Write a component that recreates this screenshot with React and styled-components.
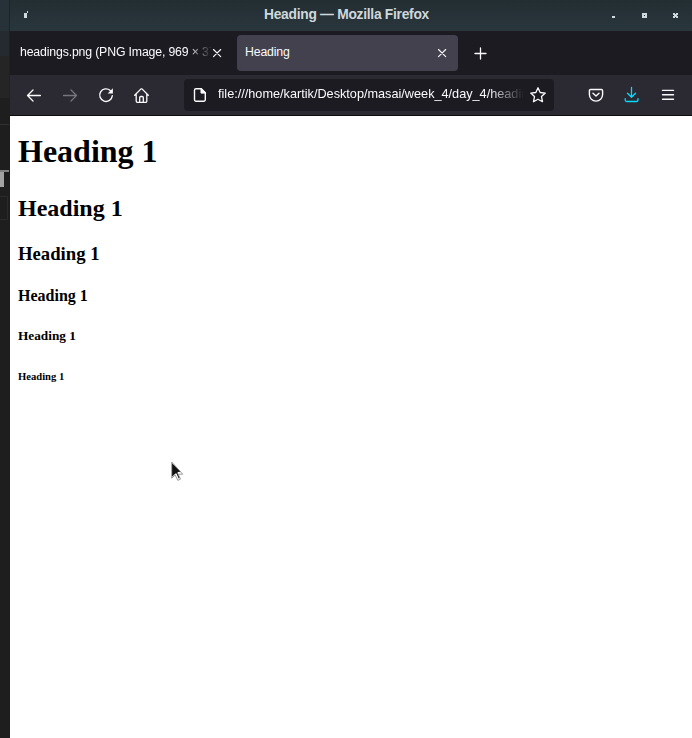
import React from "react";
import styled, { createGlobalStyle } from "styled-components";

const GlobalStyle = createGlobalStyle`
  * { box-sizing: border-box; }
  body { margin: 0; background: #1e1e1e; overflow: hidden; }
`;

const Desktop = styled.div`
  display: flex;
  width: 692px;
  height: 738px;
  overflow: hidden;
  font-family: "Liberation Sans", Arial, sans-serif;
`;

const EditorEdge = styled.div`
  width: 10px;
  flex: none;
  display: flex;
  flex-direction: column;
  background: #1e1e1e;
`;

const EdgeBlock = styled.div`
  flex: none;
  width: ${(p) => p.$w || 10}px;
  height: ${(p) => p.$h}px;
  background: ${(p) => p.$bg || "transparent"};
  border-right: ${(p) => (p.$line ? `1px solid ${p.$line}` : "none")};
`;

const EdgeLetter = styled.div`
  flex: none;
  width: 9px;
  height: 17px;
  border-top: 2px solid #818181;
  &::before {
    content: "";
    display: block;
    width: 4px;
    height: 15px;
    background: #a3a3a3;
  }
`;

const EdgeBox = styled.div`
  flex: none;
  width: 8px;
  height: 24px;
  margin-top: 9px;
  border: 1px solid #2a2a2a;
  border-left: none;
`;

const Window = styled.div`
  flex: 1;
  min-width: 0;
  display: flex;
  flex-direction: column;
  background: #fff;
`;

const TitleBar = styled.header`
  flex: none;
  height: 31px;
  display: grid;
  grid-template-columns: 100px 1fr 100px;
  background: linear-gradient(#232e33, #29363b);
`;

const WindowTitle = styled.div`
  padding-top: 6px;
  padding-right: 9px;
  text-align: center;
  white-space: nowrap;
  font-size: 13.8px;
  letter-spacing: -0.27px;
  line-height: 18px;
  font-weight: 700;
  color: #cfd8dc;
`;

const TabStrip = styled.div`
  flex: none;
  height: 44px;
  display: flex;
  align-items: flex-start;
  padding-top: 4px;
  background: #1c1b22;
`;

const Tab = styled.div`
  width: ${(p) => p.$w}px;
  height: 36px;
  margin-right: ${(p) => p.$gap}px;
  padding: 0 ${(p) => p.$pr}px 0 ${(p) => p.$pl}px;
  display: flex;
  justify-content: space-between;
  border-radius: 4px;
  color: #fbfbfe;
  background: ${(p) => (p.$active ? "#42414d" : "transparent")};
`;

const TabLabel = styled.span`
  flex: 1;
  min-width: 0;
  overflow: hidden;
  white-space: nowrap;
  font-size: 12.3px;
  line-height: 16px;
  padding-top: 9px;
  letter-spacing: -0.16px;
  mask-image: ${(p) =>
    p.$fade ? "linear-gradient(to left, transparent, black 24px)" : "none"};
`;

const Icon = styled.svg`
  flex: none;
  display: block;
  overflow: visible;
  fill: none;
  stroke: ${(p) => p.$color || "#fbfbfe"};
  stroke-width: ${(p) => p.$sw || 1.3};
  stroke-linecap: round;
  stroke-linejoin: round;
  margin-top: ${(p) => p.$mt || 0}px;
  margin-left: ${(p) => p.$ml || 0}px;
`;

const NavBar = styled.div`
  flex: none;
  height: 41px;
  display: flex;
  align-items: flex-start;
  padding: 4px 15px 0 16px;
  background: #2b2a33;
  border-bottom: 1px solid #0c0c0d;
`;

const AddressBar = styled.div`
  flex: none;
  width: 370px;
  height: 32px;
  margin-left: 34px;
  padding: 0 8px;
  display: flex;
  border-radius: 4px;
  background: #1c1b22;
`;

const Address = styled.div`
  flex: none;
  width: 306px;
  margin-left: 10px;
  padding-top: 7px;
  overflow: hidden;
  white-space: nowrap;
  font-size: 12.7px;
  line-height: 16px;
  color: #fbfbfe;
  mask-image: linear-gradient(to left, transparent, black 36px);
`;

const Page = styled.main`
  position: relative;
  flex: 1;
  display: flex;
  flex-direction: column;
  padding-left: 8px;
  background: #fff;
`;

const Heading = styled.div`
  flex: none;
  margin: ${(p) => p.$top}px 0 0;
  font-family: "Liberation Serif", "Times New Roman", serif;
  font-size: ${(p) => p.$size}px;
  line-height: ${(p) => p.$lh}px;
  font-weight: 700;
  color: #000;
`;

const Pointer = styled.svg`
  position: absolute;
  left: 161px;
  top: 345px;
`;

const headings = [
  { tag: "h1", size: 32, lh: 36, top: 17 },
  { tag: "h2", size: 24, lh: 28, top: 25 },
  { tag: "h3", size: 18.72, lh: 22, top: 21 },
  { tag: "h4", size: 16, lh: 18, top: 22 },
  { tag: "h5", size: 13.28, lh: 16, top: 23 },
  { tag: "h6", size: 10.6, lh: 12, top: 27 },
];

const CloseIcon = (p) => (
  <Icon width="8" height="8" $mt={14} $sw={1.1} {...p}>
    <path d="M.5 .5l7.2 7.2M7.7 .5L.5 7.7" />
  </Icon>
);

export default function App() {
  return (
    <>
      <GlobalStyle />
      <Desktop>
        <EditorEdge>
          <EdgeBlock $h={31} $bg="#263238" $line="#1a2529" />
          <EdgeBlock $h={25} $bg="#252a31" $line="#1c2227" />
          <EdgeBlock $h={42} $bg="#252526" $line="#1c2227" />
          <EdgeBlock $h={26} />
          <EdgeBlock $h={1} $w={9} $bg="#303031" />
          <EdgeBlock $h={45} />
          <EdgeLetter />
          <EdgeBox />
        </EditorEdge>
        <Window>
          <TitleBar>
            <svg width="100" height="31" fill="#cfd8dc" shapeRendering="crispEdges">
              <path d="M14 13h3v5h-3zM17 11h1v2h-1z" />
            </svg>
            <WindowTitle>Heading — Mozilla Firefox</WindowTitle>
            <svg width="100" height="31" fill="#cfd8dc" shapeRendering="crispEdges">
              <path d="M20 16h3v2h-3z" />
              <path fillRule="evenodd" d="M50 13h5v5h-5zM52 15v1h1v-1z" />
              <path d="M81 13h2v1h1v-1h2v2h-1v1h1v2h-2v-1h-1v1h-2v-2h1v-1h-1z" />
            </svg>
          </TitleBar>
          <TabStrip>
            <Tab $w={221} $gap={6} $pl={10} $pr={10}>
              <TabLabel $fade>headings.png (PNG Image, 969 × 37</TabLabel>
              <CloseIcon $ml={1} />
            </Tab>
            <Tab $active $w={221} $gap={17} $pl={8} $pr={12}>
              <TabLabel>Heading</TabLabel>
              <CloseIcon />
            </Tab>
            <Icon width="12" height="12" $mt={13} $sw={1.3}>
              <path d="M5.5 0v11M0 5.5h11" />
            </Icon>
          </TabStrip>
          <NavBar>
            <Icon width="16" height="16" $mt={8}>
              <path d="M14.4 8.5H1.6M7 3L1.5 8.5 7 14" />
            </Icon>
            <Icon width="16" height="16" $mt={8} $ml={20} $color="#76757d">
              <path d="M1.5 8.5h12.8M9 3l5.5 5.5L9 14" />
            </Icon>
            <Icon width="16" height="16" $mt={8} $ml={20} $sw={1.4}>
              <path d="M12.3 3.5A6.3 6.3 0 1 0 14.3 8.8" />
              <path d="M14.9 1.2v5.2H9.7z" fill="#fbfbfe" stroke="none" />
            </Icon>
            <Icon width="16" height="16" $mt={8} $ml={20} $sw={1.3}>
              <path d="M.7 8.3L7 1.9h1l6.3 6.4M2.2 7.2v6.9a1.2 1.2 0 0 0 1.2 1.2h8.2a1.2 1.2 0 0 0 1.2-1.2V7.2M5.7 15v-4.5a1 1 0 0 1 1-1h1.6a1 1 0 0 1 1 1V15" />
            </Icon>
            <AddressBar>
              <Icon width="16" height="16" $mt={8} $sw={1.4}>
                <path d="M4 1.8h5.3l4 4v7a1.5 1.5 0 0 1-1.5 1.5H4a1.5 1.5 0 0 1-1.5-1.5V3.3A1.5 1.5 0 0 1 4 1.8z" />
                <path d="M9 1.7v4.4h4.4z" fill="#fbfbfe" strokeWidth="1" />
              </Icon>
              <Address>file:///home/kartik/Desktop/masai/week_4/day_4/headin</Address>
              <Icon width="16" height="16" $mt={8} $ml={6} $sw={1.3}>
                <path d="M8 .8l2.15 4.7 5.15.6-3.8 3.5 1 5.1L8 12.2 3.5 14.7l1-5.1L.7 6.1l5.15-.6z" />
              </Icon>
            </AddressBar>
            <Icon width="16" height="16" $mt={8} $ml={34} $sw={1.4}>
              <path d="M2.6 2.5h10.8a1.2 1.2 0 0 1 1.2 1.2V7.5a6.6 6.6 0 0 1-13.2 0V3.7a1.2 1.2 0 0 1 1.2-1.2zM5 6.3l3 2.8 3-2.8" />
            </Icon>
            <Icon width="16" height="16" $mt={8} $ml={20} $sw={1.3} $color="#00ddff">
              <path d="M7.5 .5v9.7M3.5 6.3l4 4 4-4M1.2 11.7v1.3a1.5 1.5 0 0 0 1.5 1.5h9.8a1.5 1.5 0 0 0 1.5-1.5v-1.3" />
            </Icon>
            <Icon width="16" height="16" $mt={8} $ml={20} $sw={1.4}>
              <path d="M2.5 3.4h11M2.5 7.7h11M2.5 12.2h11" />
            </Icon>
          </NavBar>
          <Page>
            {headings.map((h) => (
              <Heading key={h.tag} as={h.tag} $size={h.size} $lh={h.lh} $top={h.top}>
                Heading 1
              </Heading>
            ))}
            <Pointer width="14" height="21" viewBox="0 0 14 21">
              <path
                d="M.7 1v16.2l3.5-3.2 2.6 5.4 2.7-1.3-2.3-4.9h4.5z"
                fill="#fff"
                stroke="#999"
                strokeWidth="1"
              />
              <path d="M1.1 2.3v13.5l3.3-3.3 1.1-.1 2.2 5 .8-.4-2.1-5 .5-.9 2.5-.3z" fill="#111" />
            </Pointer>
          </Page>
        </Window>
      </Desktop>
    </>
  );
}
